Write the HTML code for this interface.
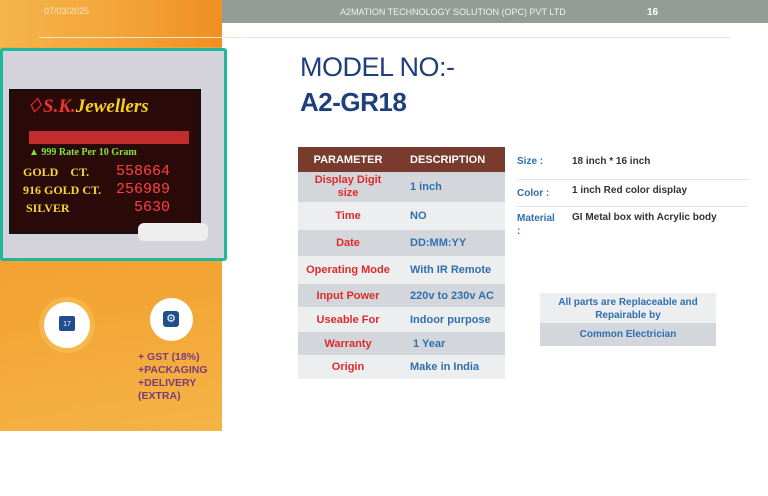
<!DOCTYPE html>
<html><head><style>
*{margin:0;padding:0;box-sizing:border-box}
body{width:768px;height:496px;background:#fff;position:relative;overflow:hidden;font-family:"Liberation Sans",sans-serif}
.a{position:absolute}
.t td{font-weight:bold;font-size:11px;padding:0}
</style></head><body>
<div class="a" style="left:0;top:0;width:222px;height:431px;background:linear-gradient(170deg,#f4b04a 0%,#f39a2c 30%,#f3a636 70%,#f4b446 100%)"></div>
<div class="a" style="left:0;top:0;width:222px;height:47px;background:linear-gradient(90deg,#f5b44c 0%,#f3a63a 50%,#f08f22 100%)"></div>
<div class="a" style="left:222px;top:0;width:546px;height:23px;background:#939d96"></div>
<div class="a" style="left:44px;top:6px;font-size:9px;color:#fbe4c4">07/03/2025</div>
<div class="a" style="left:340px;top:7px;font-size:9px;color:#eef0ee">A2MATION TECHNOLOGY SOLUTION (OPC) PVT LTD</div>
<div class="a" style="left:647px;top:7px;font-size:10px;font-weight:bold;color:#fff">16</div>
<div class="a" style="left:39px;top:37px;width:205px;height:1px;background:#f8e2c4"></div>
<div class="a" style="left:245px;top:37px;width:485px;height:1px;background:#e3e3e3"></div>
<div class="a" style="left:0;top:48px;width:227px;height:213px;border:3px solid #1fb89a;border-radius:3px;background:#d4d2da;overflow:hidden">
 <div class="a" style="left:6px;top:38px;width:192px;height:145px;background:#2a0a08;border:2px solid #111">
  <div class="a" style="left:15px;top:4px;font:italic bold 19px 'Liberation Serif',serif;color:#e82a2a">&#9826;<span style="color:#e33">S.K.</span><span style="color:#f5d11f">Jewellers</span></div>
  <div class="a" style="left:18px;top:40px;width:160px;height:13px;background:#d33;opacity:.85"></div>
  <div class="a" style="left:18px;top:56px;font:bold 10px 'Liberation Serif',serif;color:#7ee83a">&#9650; 999 Rate Per 10 Gram</div>
  <div class="a" style="left:12px;top:72px;font:bold 12px 'Liberation Serif',serif;color:#f7d633;line-height:18px">GOLD &nbsp;&nbsp; CT.<br>916 GOLD CT.<br>&nbsp;SILVER</div>
  <div class="a" style="left:105px;top:72px;font:15px 'Liberation Mono',monospace;color:#ff4040;line-height:18px">558664<br>256989<br>&nbsp;&nbsp;5630</div>
 </div>
 <div class="a" style="left:135px;top:172px;width:70px;height:18px;background:#eee;border-radius:6px"></div>
</div>
<div class="a" style="left:44px;top:302px;width:46px;height:46px;border-radius:50%;background:#fff;box-shadow:0 0 0 5px rgba(255,215,120,.3)"></div>
<div class="a" style="left:59px;top:316px;width:16px;height:15px;background:#1f4f8f;border-radius:2px;color:#fff;font-size:7px;text-align:center;line-height:17px">17</div>
<div class="a" style="left:150px;top:298px;width:43px;height:43px;border-radius:50%;background:#fff"></div>
<div class="a" style="left:163px;top:311px;width:16px;height:16px;background:#1f4f8f;border-radius:3px;color:#fff;font-size:11px;text-align:center;line-height:16px">&#9881;</div>
<div class="a" style="left:138px;top:351px;font-size:10.5px;font-weight:bold;color:#7a3b7a;line-height:13px">+ GST (18%)<br>+PACKAGING<br>+DELIVERY<br>(EXTRA)</div>
<div class="a" style="left:300px;top:52px;font-size:27px;color:#1f3f7a;letter-spacing:-0.5px">MODEL NO:-</div>
<div class="a" style="left:300px;top:87px;font-size:26px;font-weight:bold;color:#1f3f7a;letter-spacing:-0.5px">A2-GR18</div>
<table class="a t" style="left:298px;top:147px;width:207px;border-collapse:collapse">
<tr style="background:#7a3b2f;color:#fff;height:25px"><td style="text-align:center;width:100px">PARAMETER</td><td style="padding-left:12px">DESCRIPTION</td></tr>
<tr style="background:#d3d7dc;height:30px"><td style="text-align:center;color:#e02a2a;line-height:13px">Display Digit<br>size</td><td style="color:#2f6fb0;padding-left:12px">1 inch</td></tr>
<tr style="background:#eceef0;height:28px"><td style="text-align:center;color:#e02a2a">Time</td><td style="color:#2f6fb0;padding-left:12px">NO</td></tr>
<tr style="background:#d3d7dc;height:26px"><td style="text-align:center;color:#e02a2a">Date</td><td style="color:#2f6fb0;padding-left:12px">DD:MM:YY</td></tr>
<tr style="background:#eceef0;height:28px"><td style="text-align:center;color:#e02a2a">Operating Mode</td><td style="color:#2f6fb0;padding-left:12px">With IR Remote</td></tr>
<tr style="background:#d3d7dc;height:23px"><td style="text-align:center;color:#e02a2a">Input Power</td><td style="color:#2f6fb0;padding-left:12px">220v to 230v AC</td></tr>
<tr style="background:#eceef0;height:25px"><td style="text-align:center;color:#e02a2a">Useable For</td><td style="color:#2f6fb0;padding-left:12px">Indoor purpose</td></tr>
<tr style="background:#d3d7dc;height:23px"><td style="text-align:center;color:#e02a2a">Warranty</td><td style="color:#2f6fb0;padding-left:15px">1 Year</td></tr>
<tr style="background:#eceef0;height:24px"><td style="text-align:center;color:#e02a2a">Origin</td><td style="color:#2f6fb0;padding-left:12px">Make in India</td></tr>
</table>
<div class="a" style="left:517px;top:156px;font-size:10px;font-weight:bold;color:#2f6fb0">Size :</div>
<div class="a" style="left:572px;top:156px;font-size:10px;font-weight:bold;color:#333">18 inch * 16 inch</div>
<div class="a" style="left:517px;top:179px;width:231px;height:1px;background:#e2e2e2"></div>
<div class="a" style="left:517px;top:188px;font-size:10px;font-weight:bold;color:#2f6fb0">Color :</div>
<div class="a" style="left:572px;top:185px;font-size:10px;font-weight:bold;color:#333">1 inch Red color display</div>
<div class="a" style="left:517px;top:206px;width:231px;height:1px;background:#e2e2e2"></div>
<div class="a" style="left:517px;top:212px;font-size:10px;font-weight:bold;color:#2f6fb0;line-height:13px">Material<br>:</div>
<div class="a" style="left:572px;top:212px;font-size:10px;font-weight:bold;color:#333">GI Metal box with Acrylic body</div>
<div class="a" style="left:540px;top:293px;width:176px;height:30px;background:#eceef0;text-align:center;font-size:10px;font-weight:bold;color:#2f6fb0;line-height:13px;padding-top:3px">All parts are Replaceable and<br>Repairable by</div>
<div class="a" style="left:540px;top:323px;width:176px;height:23px;background:#d3d7dc;text-align:center;font-size:10px;font-weight:bold;color:#2f6fb0;line-height:23px">Common Electrician</div>
</body></html>
